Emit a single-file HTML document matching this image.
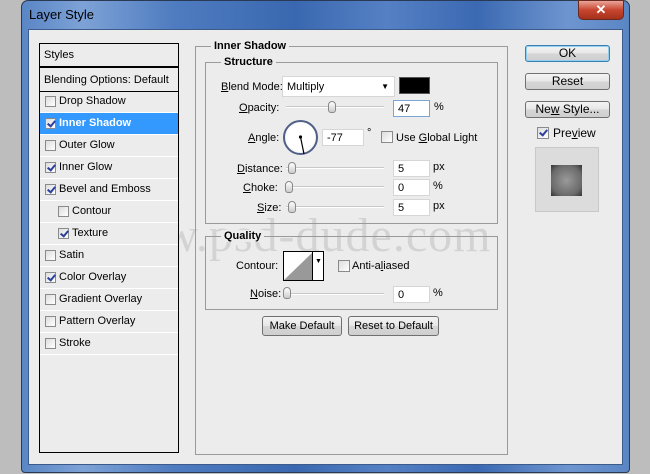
<!DOCTYPE html>
<html><head><style>
*{margin:0;padding:0;box-sizing:border-box}
body{width:650px;height:474px;background:#bdbdbd;position:relative;overflow:hidden;font-family:"Liberation Sans",sans-serif;font-size:11px;color:#000}
.a{position:absolute;white-space:nowrap}
.win{left:21px;top:0;width:609px;height:473px;border-radius:7px 7px 4px 4px;background:linear-gradient(90deg,#5a86c5 0%,#7da2d6 10%,#4f7cc0 25%,#3a68b0 45%,#5580c4 60%,#3b69b2 75%,#6e95cf 90%,#5a86c5 100%);border:1px solid #2a3a55}
.client{left:28px;top:29px;width:595px;height:436px;background:#ececec;border:1px solid #3c5a8a}
.close{left:578px;top:0;width:46px;height:20px;border-radius:0 0 5px 5px;background:linear-gradient(#e9a59a,#c8452f 50%,#a5301c);border:1px solid #6b2a20;color:#fff;text-align:center;font:bold 13px "Liberation Sans",sans-serif;line-height:17px}
.list{left:39px;top:43px;width:140px;height:410px;border:1px solid #000;background:#ececec}
.row{position:absolute;left:0;width:138px;height:22px;border-bottom:1px solid #fff;line-height:21px;padding-left:19px;white-space:nowrap}
.cb{position:absolute;width:11px;height:11px;border:1px solid #8a8a8a;background:linear-gradient(135deg,#ddd,#fff);top:5px}
.cb.c::after{content:"";position:absolute;left:3px;top:0px;width:3px;height:6px;border:solid #2b3f9c;border-width:0 2px 2px 0;transform:rotate(40deg)}
.grp{border:1px solid #9a9a9a}
.lbl{background:#ececec;font-weight:bold;padding:0 3px}
.in{background:#fff;border:1px solid #d6d6d6;height:17px;line-height:16px;padding-left:4px}
.sl{height:2px;background:#c8c8c8;border-bottom:1px solid #fff}
.th{width:8px;height:12px;border:1px solid #888;border-radius:4px 4px 3px 3px;background:linear-gradient(#fff,#ccc)}
.btn{border:1px solid #707070;border-radius:3px;background:linear-gradient(#f4f4f4 0%,#e6e6e6 50%,#d6d6d6 51%,#cfcfcf);text-align:center;font-size:12px}
u{text-decoration:underline}
</style></head><body>
<div class="a win"></div>
<div class="a" style="left:29px;top:7px;color:#000;font-size:13px;">Layer Style</div>
<div class="a close">✕</div>
<div class="a client"></div>

<div class="a" style="left:92px;top:208px;font:48px 'Liberation Serif',serif;color:#000;opacity:.1;letter-spacing:1px">www.psd-dude.com</div>

<div class="a list">
 <div class="row" style="top:0;height:24px;padding-left:4px;border-bottom:2px solid #000;line-height:22px">Styles</div>
 <div class="row" style="top:25px;height:23px;padding-left:4px;border-bottom:1px solid #000;line-height:22px">Blending Options: Default</div>
 <div class="row" style="top:47px"><span class="cb" style="left:5px"></span>Drop Shadow</div>
 <div class="row" style="top:69px;background:#3399ff;color:#fff;font-weight:bold"><span class="cb c" style="left:5px"></span>Inner Shadow</div>
 <div class="row" style="top:91px"><span class="cb" style="left:5px"></span>Outer Glow</div>
 <div class="row" style="top:113px"><span class="cb c" style="left:5px"></span>Inner Glow</div>
 <div class="row" style="top:135px"><span class="cb c" style="left:5px"></span>Bevel and Emboss</div>
 <div class="row" style="top:157px;padding-left:32px"><span class="cb" style="left:18px"></span>Contour</div>
 <div class="row" style="top:179px;padding-left:32px"><span class="cb c" style="left:18px"></span>Texture</div>
 <div class="row" style="top:201px"><span class="cb" style="left:5px"></span>Satin</div>
 <div class="row" style="top:223px"><span class="cb c" style="left:5px"></span>Color Overlay</div>
 <div class="row" style="top:245px"><span class="cb" style="left:5px"></span>Gradient Overlay</div>
 <div class="row" style="top:267px"><span class="cb" style="left:5px"></span>Pattern Overlay</div>
 <div class="row" style="top:289px"><span class="cb" style="left:5px"></span>Stroke</div>
</div>

<div class="a grp" style="left:195px;top:46px;width:313px;height:409px"></div>
<div class="a lbl" style="left:211px;top:40px">Inner Shadow</div>
<div class="a grp" style="left:205px;top:62px;width:293px;height:162px"></div>
<div class="a lbl" style="left:221px;top:56px">Structure</div>

<div class="a" style="left:221px;top:81px"><u>B</u>lend Mode:</div>
<div class="a in" style="left:282px;top:76px;width:113px;height:21px;line-height:20px">Multiply<span style="position:absolute;right:5px;top:0;font-size:8px">▼</span></div>
<div class="a" style="left:399px;top:77px;width:31px;height:17px;background:#000;border:1px solid #555"></div>

<div class="a" style="left:239px;top:102px"><u>O</u>pacity:</div>
<div class="a sl" style="left:286px;top:106px;width:98px"></div>
<div class="a th" style="left:328px;top:101px"></div>
<div class="a in" style="left:393px;top:100px;width:37px;border-color:#7aa6d6">47</div>
<div class="a" style="left:434px;top:101px">%</div>

<div class="a" style="left:248px;top:132px"><u>A</u>ngle:</div>
<div class="a" style="left:283px;top:120px;width:35px;height:35px;border-radius:50%;border:2px solid #4f5f85;background:radial-gradient(#fff 60%,#e4e4e4)"></div>
<svg class="a" style="left:283px;top:120px" width="35" height="35"><line x1="17.5" y1="17" x2="21" y2="34" stroke="#000" stroke-width="1.2"/><circle cx="17.5" cy="17" r="1.6"/></svg>
<div class="a in" style="left:322px;top:129px;width:42px">-77</div>
<div class="a" style="left:367px;top:127px">°</div>
<div class="a cb" style="left:381px;top:131px;width:12px;height:12px"></div>
<div class="a" style="left:396px;top:132px">Use <u>G</u>lobal Light</div>

<div class="a" style="left:237px;top:163px"><u>D</u>istance:</div>
<div class="a sl" style="left:286px;top:167px;width:98px"></div>
<div class="a th" style="left:288px;top:162px"></div>
<div class="a in" style="left:393px;top:160px;width:37px">5</div>
<div class="a" style="left:433px;top:161px">px</div>

<div class="a" style="left:243px;top:182px"><u>C</u>hoke:</div>
<div class="a sl" style="left:286px;top:186px;width:98px"></div>
<div class="a th" style="left:285px;top:181px"></div>
<div class="a in" style="left:393px;top:179px;width:37px">0</div>
<div class="a" style="left:433px;top:180px">%</div>

<div class="a" style="left:257px;top:202px"><u>S</u>ize:</div>
<div class="a sl" style="left:286px;top:206px;width:98px"></div>
<div class="a th" style="left:288px;top:201px"></div>
<div class="a in" style="left:393px;top:199px;width:37px">5</div>
<div class="a" style="left:433px;top:200px">px</div>

<div class="a grp" style="left:205px;top:236px;width:293px;height:74px"></div>
<div class="a lbl" style="left:221px;top:230px">Quality</div>
<div class="a" style="left:236px;top:260px">Contour:</div>
<div class="a" style="left:283px;top:251px;width:41px;height:30px;border:1px solid #000;background:#fff"></div>
<svg class="a" style="left:284px;top:252px" width="29" height="28"><polygon points="0,28 29,0 29,28" fill="#999"/></svg>
<div class="a" style="left:312px;top:251px;width:1px;height:30px;background:#000"></div>
<div class="a" style="left:315px;top:258px;font-size:7px">▼</div>
<div class="a cb" style="left:338px;top:260px;width:12px;height:12px"></div>
<div class="a" style="left:352px;top:260px">Anti-a<u>l</u>iased</div>

<div class="a" style="left:250px;top:288px"><u>N</u>oise:</div>
<div class="a sl" style="left:286px;top:293px;width:98px"></div>
<div class="a th" style="left:283px;top:287px"></div>
<div class="a in" style="left:393px;top:286px;width:37px">0</div>
<div class="a" style="left:433px;top:287px">%</div>

<div class="a btn" style="left:262px;top:316px;width:80px;height:20px;line-height:18px;font-size:11px">Make Default</div>
<div class="a btn" style="left:348px;top:316px;width:91px;height:20px;line-height:18px;font-size:11px">Reset to Default</div>

<div class="a btn" style="left:525px;top:45px;width:85px;height:17px;line-height:15px;border-color:#3c7fb1;box-shadow:0 0 0 1px #8fd0f0 inset">OK</div>
<div class="a btn" style="left:525px;top:73px;width:85px;height:17px;line-height:15px">Reset</div>
<div class="a btn" style="left:525px;top:101px;width:85px;height:17px;line-height:15px">Ne<u>w</u> Style...</div>
<div class="a cb c" style="left:537px;top:127px;width:12px;height:12px"></div>
<div class="a" style="left:553px;top:126px;font-size:12px">Pre<u>v</u>iew</div>
<div class="a" style="left:535px;top:147px;width:64px;height:65px;background:#dcdcdc;border:1px solid #c8c8c8"></div>
<div class="a" style="left:551px;top:165px;width:31px;height:31px;background:radial-gradient(#9a9a9a,#6a6a6a 70%,#333);"></div>
</body></html>
